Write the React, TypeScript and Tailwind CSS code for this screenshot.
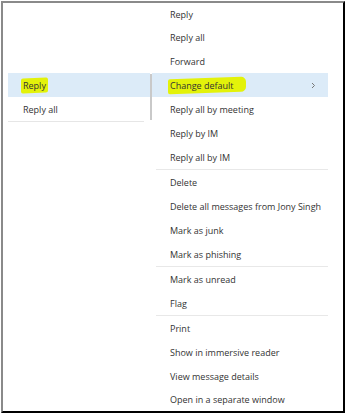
import React from "react";

type Item = { label: string; active?: boolean; marker?: boolean; submenu?: boolean };

const groups: Item[][] = [
  [
    { label: "Reply" },
    { label: "Reply all" },
    { label: "Forward" },
    { label: "Change default", active: true, marker: true, submenu: true },
    { label: "Reply all by meeting" },
    { label: "Reply by IM" },
    { label: "Reply all by IM" },
  ],
  [
    { label: "Delete" },
    { label: "Delete all messages from Jony Singh" },
    { label: "Mark as junk" },
    { label: "Mark as phishing" },
  ],
  [{ label: "Mark as unread" }, { label: "Flag" }],
  [
    { label: "Print" },
    { label: "Show in immersive reader" },
    { label: "View message details" },
    { label: "Open in a separate window" },
  ],
];

function Marker({ wide }: { wide?: boolean }) {
  // hand-drawn highlighter stroke laid over the word
  return (
    <span
      className={`absolute -left-[2px] ${
        wide ? "-right-[12px] rounded-r-[5px]" : "-right-[2px]"
      } -top-[3px] -bottom-[3px] bg-[#e3f20a] rounded-[2px] -skew-y-2`}
    />
  );
}

function Row({ item, first, last }: { item: Item; first?: boolean; last?: boolean }) {
  const h = first ? "h-[22px]" : last ? "h-[23px]" : "h-6";
  return (
    <div
      className={`${h} flex items-center pl-[18px] pr-[12px] whitespace-nowrap ${
        item.active ? "bg-[#dcebf8]" : ""
      }`}
    >
      <span className="relative">
        {item.marker && <Marker wide />}
        <span className="relative">{item.label}</span>
      </span>
      {item.submenu && (
        <svg className="ml-auto" width="5" height="7" viewBox="0 0 5 7">
          <polyline points="1,1 3.5,3.5 1,6" fill="none" stroke="#777" strokeWidth="1" />
        </svg>
      )}
    </div>
  );
}

export default function App() {
  return (
    <div
      className="w-[350px] h-[419px] bg-white text-[#333333] text-[9px] leading-none pt-[1px] pl-[1px]"
      style={{ fontFamily: '"Open Sans", "Noto Sans", sans-serif' }}
    >
      <div className="w-[344px] h-[412px] border-t-2 border-l-2 border-[#8a8a8a] border-r-2 border-r-black border-b-2 border-b-black flex">
        {/* left menu */}
        <div className="pl-[5px] pt-[70px] flex items-start">
          <div className="w-[142px]">
            <div className="h-6 flex items-center pl-[15px] bg-[#dcebf8]">
              <span className="relative">
                <Marker />
                <span className="relative">Reply</span>
              </span>
            </div>
            <div className="h-6 flex items-center pl-[15px]">Reply all</div>
            <div className="h-px bg-[#e6e6e6] mr-[6px]" />
          </div>
          <div className="w-[2px] h-[46px] mt-[1px] bg-[#c9c9c9]" />
        </div>

        {/* right menu */}
        <div className="w-[176px] flex flex-col">
          {groups.map((g, gi) => (
            <React.Fragment key={gi}>
              {gi > 0 && <div className="h-px bg-[#e8e8e8] ml-[4px]" />}
              {g.map((item, i) => (
                <Row
                  key={item.label}
                  item={item}
                  first={gi === 0 && i === 0}
                  last={gi === groups.length - 1 && i === g.length - 1}
                />
              ))}
            </React.Fragment>
          ))}
        </div>
      </div>
    </div>
  );
}
